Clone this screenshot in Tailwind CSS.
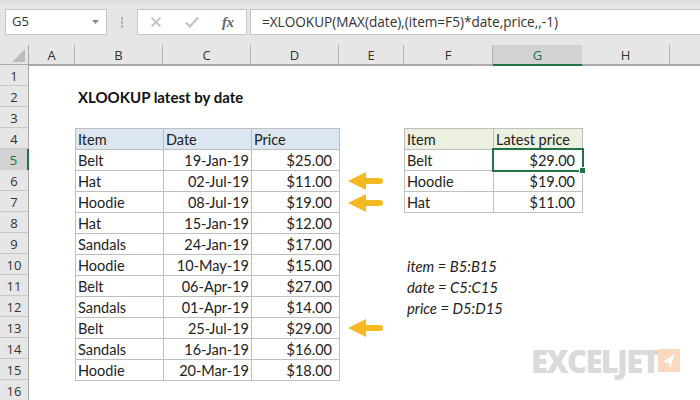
<!DOCTYPE html>
<html lang="en">
<head>
<meta charset="UTF-8">
<title>XLOOKUP latest by date</title>
<script src="https://cdn.jsdelivr.net/npm/@tailwindcss/browser@4"></script>
</head>
<body class="bg-white">
<div class="relative w-[700px] h-[400px] overflow-hidden font-['Open_Sans',sans-serif] text-[#333]">

  <!-- formula bar -->
  <div class="h-[45px] bg-linear-to-b from-[#dcdcdc] to-[#e6e6e6] to-[7px] pt-[9px] flex items-start">
    <div class="ml-[5px] w-[102px] h-[26px] bg-white border border-[#c6c6c6] flex items-center justify-between pl-[6px] pr-[5px] text-[13px]">
      <span>G5</span>
      <svg width="8" height="4" viewBox="0 0 8 4" class="mr-[1px]"><path d="M0 0h7L3.500 4z" fill="#8a8a8a"/></svg>
    </div>
    <div class="w-[30px] h-[26px] flex flex-col items-center justify-center gap-[1px]">
      <span class="w-[2px] h-[3px] bg-[#b4b4b4]"></span>
      <span class="w-[2px] h-[3px] bg-[#b4b4b4]"></span>
      <span class="w-[2px] h-[3px] bg-[#b4b4b4]"></span>
    </div>
    <div class="w-[110px] h-[26px] bg-white border border-[#c6c6c6] flex items-center">
      <svg width="12" height="12" viewBox="0 0 12 12" class="ml-[12px]"><path d="M1.500 1.500l9 9M10.500 1.500l-9 9" stroke="#c4c4c4" stroke-width="1.800" fill="none"/></svg>
      <svg width="14" height="12" viewBox="0 0 14 12" class="ml-[23px]"><path d="M1 6.500l4 4 8-9" stroke="#c4c4c4" stroke-width="2.200" fill="none"/></svg>
      <span class="ml-[23px] font-['Liberation_Serif',serif] italic font-bold text-[15px] tracking-[-0.5px] text-[#666]">fx</span>
    </div>
    <div class="ml-[3px] flex-1 h-[26px] bg-white border-y border-l border-[#c6c6c6] flex items-center pl-[11px] text-[13.600px]">=XLOOKUP(MAX(date),(item=F5)*date,price,,-1)</div>
  </div>

  <!-- column headers -->
  <div class="flex h-[21px] bg-[#e6e6e6] border-b-2 border-[#a9a9a9] text-[13px] text-center leading-[20px]">
    <div class="w-[29px] border-r border-[#a9a9a9] flex items-end justify-end pr-[3px] pb-[2px]">
      <svg width="13" height="13" viewBox="0 0 13 13"><path d="M13 0v13H0z" fill="#bdbdbd"/></svg>
    </div>
    <div class="w-[46px] border-r border-[#b4b4b4]">A</div>
    <div class="w-[88px] border-r border-[#b4b4b4]">B</div>
    <div class="w-[88px] border-r border-[#b4b4b4]">C</div>
    <div class="w-[88px] border-r border-[#b4b4b4]">D</div>
    <div class="w-[65px] border-r border-[#b4b4b4]">E</div>
    <div class="w-[89px] border-r border-[#b4b4b4]">F</div>
    <div class="w-[89px] h-[21px] bg-[#d2d2d2] border-b-2 border-[#217346] text-[#217346]">G</div>
    <div class="w-[88px] border-r border-[#b4b4b4]">H</div>
  </div>

  <div class="flex -mt-px">
    <!-- row headers -->
    <div class="w-[29px] bg-[#e6e6e6] border-r border-[#a9a9a9] text-[13px] text-center leading-[22px] shrink-0">
      <div class="h-[21px] border-b border-[#c8c8c8]">1</div>
      <div class="h-[21px] border-b border-[#c8c8c8]">2</div>
      <div class="h-[21px] border-b border-[#c8c8c8]">3</div>
      <div class="h-[21px] border-b border-[#c8c8c8]">4</div>
      <div class="h-[21px] bg-[#d2d2d2] border-r-2 border-[#217346] text-[#217346] -mr-px">5</div>
      <div class="h-[21px] border-b border-[#c8c8c8]">6</div>
      <div class="h-[21px] border-b border-[#c8c8c8]">7</div>
      <div class="h-[21px] border-b border-[#c8c8c8]">8</div>
      <div class="h-[21px] border-b border-[#c8c8c8]">9</div>
      <div class="h-[21px] border-b border-[#c8c8c8]">10</div>
      <div class="h-[21px] border-b border-[#c8c8c8]">11</div>
      <div class="h-[21px] border-b border-[#c8c8c8]">12</div>
      <div class="h-[21px] border-b border-[#c8c8c8]">13</div>
      <div class="h-[21px] border-b border-[#c8c8c8]">14</div>
      <div class="h-[21px] border-b border-[#c8c8c8]">15</div>
      <div class="h-[21px]">16</div>
    </div>

    <!-- sheet -->
    <div class="pl-[46px] pt-[21px] font-['Lato',sans-serif] text-[14.500px] leading-[22px] text-[#222]">
      <div class="h-[42px] pl-[3px] font-bold text-[15px] text-[#111]">XLOOKUP latest by date</div>

      <div class="flex items-start">
        <div class="w-[265px] grid grid-cols-[88px_88px_88px] border-t border-l border-[#bfbfbf] [&>div]:h-[21px] [&>div]:border-r [&>div]:border-b [&>div]:border-[#bfbfbf] [&>div]:px-[2px]">
          <div class="bg-[#dce6f1]">Item</div><div class="bg-[#dce6f1]">Date</div><div class="bg-[#dce6f1]">Price</div>
          <div>Belt</div><div class="text-right">19-Jan-19</div><div class="text-right pr-[7px]!">$25.00</div>
          <div>Hat</div><div class="text-right">02-Jul-19</div><div class="text-right pr-[7px]!">$11.00</div>
          <div>Hoodie</div><div class="text-right">08-Jul-19</div><div class="text-right pr-[7px]!">$19.00</div>
          <div>Hat</div><div class="text-right">15-Jan-19</div><div class="text-right pr-[7px]!">$12.00</div>
          <div>Sandals</div><div class="text-right">24-Jan-19</div><div class="text-right pr-[7px]!">$17.00</div>
          <div>Hoodie</div><div class="text-right">10-May-19</div><div class="text-right pr-[7px]!">$15.00</div>
          <div>Belt</div><div class="text-right">06-Apr-19</div><div class="text-right pr-[7px]!">$27.00</div>
          <div>Sandals</div><div class="text-right">01-Apr-19</div><div class="text-right pr-[7px]!">$14.00</div>
          <div>Belt</div><div class="text-right">25-Jul-19</div><div class="text-right pr-[7px]!">$29.00</div>
          <div>Sandals</div><div class="text-right">16-Jan-19</div><div class="text-right pr-[7px]!">$16.00</div>
          <div>Hoodie</div><div class="text-right">20-Mar-19</div><div class="text-right pr-[7px]!">$18.00</div>
        </div>

        <div class="ml-[64px]">
          <div class="relative w-[179px] grid grid-cols-[89px_89px] border-t border-l border-[#bfbfbf] [&>div]:h-[21px] [&>div]:border-r [&>div]:border-b [&>div]:border-[#bfbfbf] [&>div]:px-[2px]">
            <div class="bg-[#ebf1de]">Item</div><div class="bg-[#ebf1de]">Latest price</div>
            <div>Belt</div><div class="text-right pr-[7px]!">$29.00</div>
            <div>Hoodie</div><div class="text-right pr-[7px]!">$19.00</div>
            <div>Hat</div><div class="text-right pr-[7px]!">$11.00</div>
            <!-- selected cell G5 -->
            <span class="absolute left-[87px] top-[19px] w-[92px] h-[24px] border-2 border-[#217346]"></span>
            <span class="absolute left-[174px] top-[38px] w-[5px] h-[5px] bg-[#217346] border border-white box-content"></span>
          </div>
          <div class="mt-[42px] pl-[3px] italic text-[14.800px] text-[#222]">
            <div class="h-[21px]">item = B5:B15</div>
            <div class="h-[21px]">date = C5:C15</div>
            <div class="h-[21px]">price = D5:D15</div>
          </div>
        </div>
      </div>
    </div>
  </div>

  <!-- arrows -->
  <svg class="absolute left-[348px] top-[171px]" width="36" height="20" viewBox="0 0 36 20"><path d="M0 10L18 1V7H32a3 3 0 0 1 0 6H18v6z" fill="#f5b923"/></svg>
  <svg class="absolute left-[348px] top-[193px]" width="36" height="20" viewBox="0 0 36 20"><path d="M0 10L18 1V7H32a3 3 0 0 1 0 6H18v6z" fill="#f5b923"/></svg>
  <svg class="absolute left-[348px] top-[318px]" width="36" height="20" viewBox="0 0 36 20"><path d="M0 10L18 1V7H32a3 3 0 0 1 0 6H18v6z" fill="#f5b923"/></svg>

  <!-- logo -->
  <div class="absolute left-[531px] top-[343px] flex items-start">
    <span class="w-[127px] font-['Open_Sans',sans-serif] font-extrabold text-[31px] leading-[36px] tracking-[-1.700px] text-[#d9dadb]">EXCELJET</span>
    <div class="mt-[6px] w-[22px] h-[23px] bg-[#fad9bf] flex items-center justify-center">
      <svg width="14" height="16" viewBox="0 0 14 16"><path d="M13 1L1 9l6 1 1 5z" fill="#fff"/></svg>
    </div>
  </div>
</div>
</body>
</html>
